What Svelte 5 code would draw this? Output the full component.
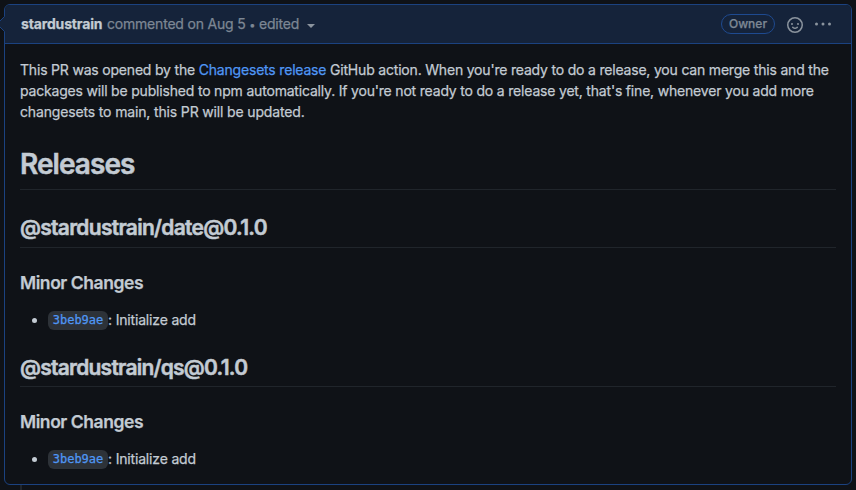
<script>
  const releases = [
    { name: '@stardustrain/date@0.1.0', cls: 'date', hash: '3beb9ae', text: ': Initialize add' },
    { name: '@stardustrain/qs@0.1.0', cls: 'qs', hash: '3beb9ae', text: ': Initialize add' },
  ];
</script>

<div class="timeline">
  <article class="comment">
    <svg class="pointer" width="8" height="16" viewBox="0 0 8 16"><path d="M8 0L0 8L8 16Z" fill="#15233a" /><path d="M7.5 0.5L0 8L7.5 15.5" fill="none" stroke="#1b4280" /></svg>
    <header>
      <div class="meta"><strong>stardustrain</strong><span class="when">commented on Aug 5 <b>•</b> edited</span><i class="caret"></i></div>
      <div class="actions">
        <span class="label">Owner</span>
        <svg class="smile" width="16" height="16" viewBox="0 0 16 16" fill="#8b949e"><path fill-rule="evenodd" d="M1.5 8a6.5 6.5 0 1113 0 6.5 6.5 0 01-13 0zM8 0a8 8 0 100 16A8 8 0 008 0zM5 8a1 1 0 100-2 1 1 0 000 2zm7-1a1 1 0 11-2 0 1 1 0 012 0zM5.32 9.636a.75.75 0 011.038.175l.007.009c.103.118.22.222.35.31.264.178.683.37 1.285.37.602 0 1.02-.192 1.285-.371.13-.088.247-.192.35-.31l.007-.008a.75.75 0 111.222.87l-.614-.431c.614.43.614.431.613.431v.001l-.001.002-.002.003-.005.007-.014.019a1.984 1.984 0 01-.184.213c-.16.166-.338.316-.53.445-.63.418-1.37.638-2.127.629-.946 0-1.652-.308-2.126-.63a3.331 3.331 0 01-.715-.657l-.014-.02-.005-.006-.002-.003v-.002h-.001l.613-.432-.614.43a.75.75 0 01.183-1.044z" /></svg>
        <svg class="dots" width="16" height="16" viewBox="0 0 16 16" fill="#8b949e"><circle cx="1.5" cy="8" r="1.5" /><circle cx="8" cy="8" r="1.5" /><circle cx="14.5" cy="8" r="1.5" /></svg>
      </div>
    </header>
    <div class="body">
      <p>
        <span class="line l1">This PR was opened by the <a href="#changesets">Changesets release</a> GitHub action. When you're ready to do a release, you can merge this and the</span>
        <span class="line l2">packages will be published to npm automatically. If you're not ready to do a release yet, that's fine, whenever you add more</span>
        <span class="line l3">changesets to main, this PR will be updated.</span>
      </p>
      <h1>Releases</h1>
      {#each releases as r}
        <h2 class={r.cls}>{r.name}</h2>
        <h3>Minor Changes</h3>
        <ul><li><code>{r.hash}</code><span class="change">{r.text}</span></li></ul>
      {/each}
    </div>
  </article>
  <div class="rail"></div>
</div>

<style>
  :global(body) { background: #0e1116; }
  .timeline {
    box-sizing: border-box;
    height: 490px;
    padding: 4px 4px 0;
    overflow: hidden;
    background: #0f1217;
    color: #c3cbd3;
    font: 14px/21px Inter, "Liberation Sans", sans-serif;
    -webkit-text-stroke: 0.25px currentColor;
  }
  .comment {
    position: relative;
    box-sizing: border-box;
    height: 481px;
    border: 1px solid #1b4280;
    border-radius: 6px;
  }
  .pointer { position: absolute; left: -8px; top: 11px; }
  header {
    display: flex;
    justify-content: space-between;
    align-items: center;
    box-sizing: border-box;
    height: 39px;
    padding: 0 20px 0 16px;
    background: #15233a;
    border-bottom: 1px solid #1b4280;
    border-radius: 5px 5px 0 0;
  }
  .meta, .actions { display: flex; align-items: center; white-space: nowrap; }
  .meta { padding-bottom: 2px; color: #7d8794; }
  .meta strong { width: 86px; color: #c3cbd3; font-weight: 700; letter-spacing: -0.15px; }
  .when { width: 200px; letter-spacing: -0.2px; }
  .when b { font-size: 11px; font-weight: 400; line-height: 0; }
  .caret { margin-top: 5px; border: 4px solid transparent; border-top-color: #8b949e; border-bottom: 0; }
  .label {
    box-sizing: border-box;
    width: 54px;
    height: 20px;
    border: 1px solid #1e4a90;
    border-radius: 10px;
    color: #7d8794;
    font-size: 12px;
    font-weight: 500;
    line-height: 18px;
    text-align: center;
  }
  .smile { margin: 2px 0 0 12px; }
  .dots { margin-left: 12px; }
  .body { padding: 15px 15px 0; }
  p, h1, h2, h3, ul { margin: 0; }
  .line { display: block; white-space: nowrap; }
  .l1 { letter-spacing: -0.192px; }
  .l2 { letter-spacing: -0.188px; }
  .l3 { letter-spacing: -0.15px; }
  a { color: #4f97f5; text-decoration: none; }
  h1, h2 { box-sizing: border-box; border-bottom: 1px solid #20252b; font-weight: 600; -webkit-text-stroke-width: 0.5px; }
  h1 { height: 44px; margin-top: 24px; padding-top: 1px; font-size: 28px; line-height: 35px; letter-spacing: -0.95px; }
  h2 { height: 33px; margin-top: 24px; font-size: 21px; line-height: 26px; letter-spacing: -0.72px; }
  .date { margin-top: 25px; }
  .qs { padding-top: 1px; letter-spacing: -0.76px; }
  h3 { margin-top: 24px; font-size: 17.5px; font-weight: 600; line-height: 22px; letter-spacing: -0.43px; }
  ul { margin-top: 15px; padding-left: 28px; }
  li { height: 21px; white-space: nowrap; }
  code {
    display: inline-block;
    box-sizing: border-box;
    width: 60px;
    height: 19px;
    border-radius: 6px;
    background: #2d3238;
    color: #4f97f5;
    font: 12px/19px "DejaVu Sans Mono", monospace;
    text-align: center;
    vertical-align: 1px;
  }
  .change { letter-spacing: -0.17px; }
  .rail { width: 2px; height: 5px; margin-left: 16px; background: #20252b; }
</style>
